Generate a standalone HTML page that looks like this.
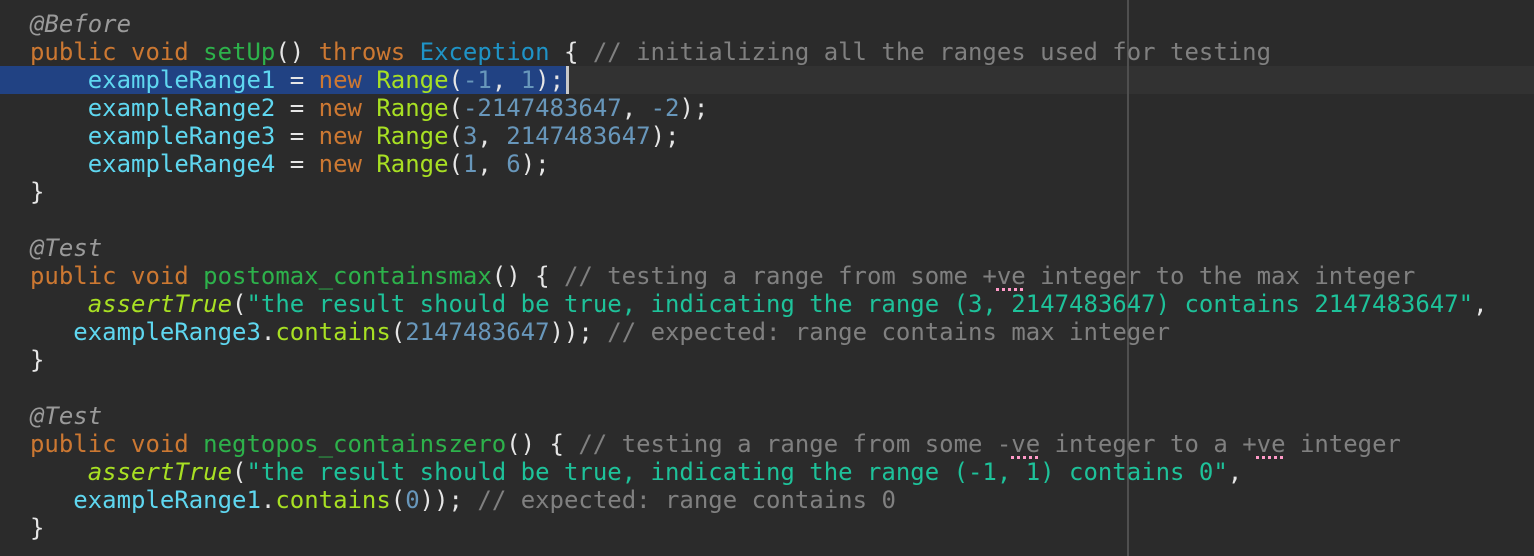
<!DOCTYPE html>
<html><head><style>
html,body{margin:0;padding:0;background:#2b2b2b;width:1534px;height:556px;overflow:hidden}
.ed{position:relative;width:1534px;height:556px;font-family:"DejaVu Sans Mono","Liberation Mono",monospace;font-size:23.98px;color:#e6e6e6}
.l{position:absolute;left:30px;height:28px;line-height:28px;white-space:pre;margin-top:1px}
.k{color:#cc7832}.f{color:#2db24b}.x{color:#1f93c6}.v{color:#5fd7f0}.r{color:#a8e023}.n{color:#6897bb}
.s{color:#1ec29a}.c{color:#808080}.a{color:#9a9a9a;font-style:italic}.i{color:#a8e023;font-style:italic}
.u{text-decoration:underline dotted #ff9ac8;text-decoration-thickness:3px;text-underline-offset:4px}
</style></head><body><div class="ed">
<div style="position:absolute;left:0;top:66px;width:1534px;height:28px;background:#323232"></div>
<div style="position:absolute;left:0;top:66px;width:566px;height:28px;background:#214283"></div>
<div style="position:absolute;left:566px;top:66px;width:3px;height:28px;background:#c8c8c8"></div>
<div style="position:absolute;left:1127px;top:0;width:2px;height:556px;background:#4f4f4f"></div>
<div class="l" style="top:9px"><span class="a">@Before</span></div>
<div class="l" style="top:37px"><span class="k">public void </span><span class="f">setUp</span>() <span class="k">throws </span><span class="x">Exception</span> { <span class="c">// initializing all the ranges used for testing</span></div>
<div class="l" style="top:65px">    <span class="v">exampleRange1</span> = <span class="k">new </span><span class="r">Range</span>(<span class="n">-1</span>, <span class="n">1</span>);</div>
<div class="l" style="top:93px">    <span class="v">exampleRange2</span> = <span class="k">new </span><span class="r">Range</span>(<span class="n">-2147483647</span>, <span class="n">-2</span>);</div>
<div class="l" style="top:121px">    <span class="v">exampleRange3</span> = <span class="k">new </span><span class="r">Range</span>(<span class="n">3</span>, <span class="n">2147483647</span>);</div>
<div class="l" style="top:149px">    <span class="v">exampleRange4</span> = <span class="k">new </span><span class="r">Range</span>(<span class="n">1</span>, <span class="n">6</span>);</div>
<div class="l" style="top:177px">}</div>
<div class="l" style="top:233px"><span class="a">@Test</span></div>
<div class="l" style="top:261px"><span class="k">public void </span><span class="f">postomax_containsmax</span>() { <span class="c">// testing a range from some +<span class="u">ve</span> integer to the max integer</span></div>
<div class="l" style="top:289px">    <span class="i">assertTrue</span>(<span class="s">"the result should be true, indicating the range (3, 2147483647) contains 2147483647"</span>,</div>
<div class="l" style="top:317px">   <span class="v">exampleRange3</span>.<span class="r">contains</span>(<span class="n">2147483647</span>)); <span class="c">// expected: range contains max integer</span></div>
<div class="l" style="top:345px">}</div>
<div class="l" style="top:401px"><span class="a">@Test</span></div>
<div class="l" style="top:429px"><span class="k">public void </span><span class="f">negtopos_containszero</span>() { <span class="c">// testing a range from some -<span class="u">ve</span> integer to a +<span class="u">ve</span> integer</span></div>
<div class="l" style="top:457px">    <span class="i">assertTrue</span>(<span class="s">"the result should be true, indicating the range (-1, 1) contains 0"</span>,</div>
<div class="l" style="top:485px">   <span class="v">exampleRange1</span>.<span class="r">contains</span>(<span class="n">0</span>)); <span class="c">// expected: range contains 0</span></div>
<div class="l" style="top:513px">}</div>
</div></body></html>
